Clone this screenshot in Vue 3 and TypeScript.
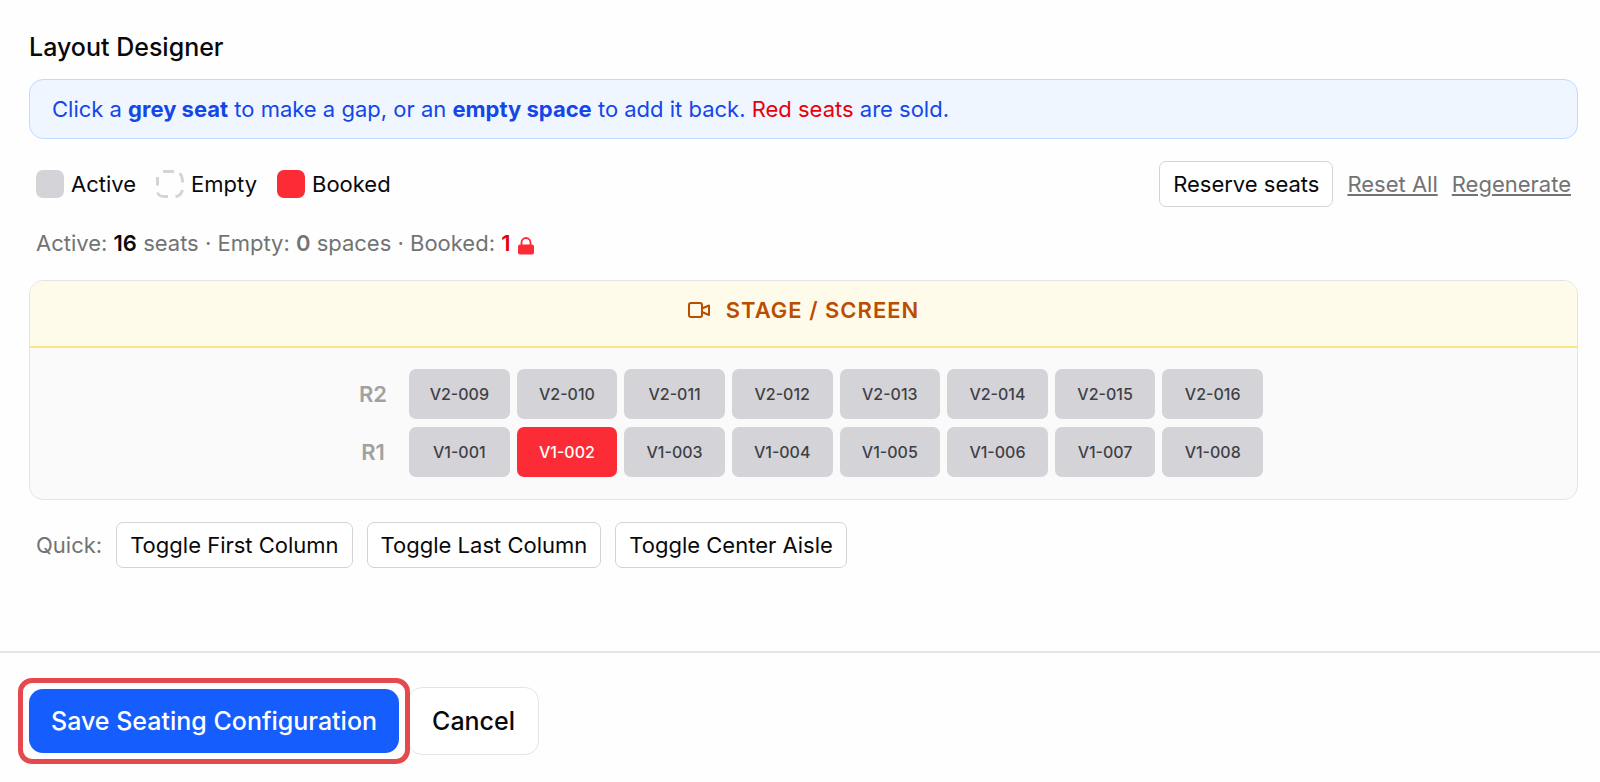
<script setup lang="ts">
import { computed, ref } from 'vue'

type SeatState = 'active' | 'empty' | 'booked'
interface Seat { id: string; state: SeatState }
interface Row { label: string; seats: Seat[] }

function makeRow(index: number, first: number): Row {
  return {
    label: `R${index}`,
    seats: Array.from({ length: 8 }, (_, i): Seat => {
      const id = `V${index}-${String(first + i).padStart(3, '0')}`
      return { id, state: id === 'V1-002' ? 'booked' : 'active' }
    }),
  }
}

const build = (): Row[] => [makeRow(2, 9), makeRow(1, 1)]
const rows = ref<Row[]>(build())

const all = computed(() => rows.value.flatMap((r) => r.seats))
const emptyCount = computed(() => all.value.filter((s) => s.state === 'empty').length)
const bookedCount = computed(() => all.value.filter((s) => s.state === 'booked').length)
const activeCount = computed(() => all.value.length - emptyCount.value)

function toggle(seat: Seat) {
  if (seat.state !== 'booked') seat.state = seat.state === 'active' ? 'empty' : 'active'
}
function toggleColumns(columns: number[]) {
  rows.value.forEach((r) => columns.forEach((c) => toggle(r.seats[c])))
}
function reset() {
  rows.value = build()
}

const quick = [
  { label: 'Toggle First Column', columns: [0] },
  { label: 'Toggle Last Column', columns: [7] },
  { label: 'Toggle Center Aisle', columns: [3, 4] },
]
</script>

<template>
  <main class="page">
    <section class="designer">
      <h2 class="title">Layout Designer</h2>

      <p class="hint">
        Click a <strong>grey seat</strong> to make a gap, or an <strong>empty space</strong> to add it back.
        <span class="sold">Red seats</span> are sold.
      </p>

      <div class="toolbar">
        <ul class="legend">
          <li><span class="swatch active"></span>Active</li>
          <li>
            <svg class="swatch" viewBox="0 0 28 28" fill="none" stroke="#d4d4d8" stroke-width="3" aria-hidden="true">
              <path d="M7 1.5h11M23.500 3.500q3 2 3 9M1.500 7v8.500M1.500 22.500q1 4 6.500 4h4M19.500 26.500q5.500-.5 7-6.500" />
            </svg>Empty
          </li>
          <li><span class="swatch booked"></span>Booked</li>
        </ul>
        <div class="actions">
          <button type="button" class="small">Reserve seats</button>
          <button type="button" class="link" @click="reset">Reset All</button>
          <button type="button" class="link" @click="reset">Regenerate</button>
        </div>
      </div>

      <p class="stats">
        Active: <b class="dark">{{ activeCount }}</b> seats · Empty: <b>{{ emptyCount }}</b> spaces · Booked:
        <b class="sold">{{ bookedCount }}</b>
        <svg class="lock" viewBox="0 0 16 18" aria-hidden="true">
          <path d="M3.500 8V5.500a4.500 4.500 0 0 1 9 0V8" fill="none" stroke="#fb2c36" stroke-width="1.800" />
          <rect y="7.500" width="16" height="10" rx="2" fill="#fb2c36" />
        </svg>
      </p>

      <div class="panel">
        <div class="stage">
          <svg class="camera" viewBox="0 0 22 16" fill="none" stroke="currentColor" stroke-width="2" stroke-linejoin="round" aria-hidden="true">
            <rect x="1" y="1" width="13" height="14" rx="2" />
            <path d="M14 6.500l7-3v9.500l-7-3" />
          </svg>
          <span>STAGE / SCREEN</span>
        </div>
        <div class="seats">
          <div v-for="row in rows" :key="row.label" class="row">
            <span class="row-label">{{ row.label }}</span>
            <button v-for="seat in row.seats" :key="seat.id" type="button" class="seat" :class="seat.state" @click="toggle(seat)">{{ seat.id }}</button>
          </div>
        </div>
      </div>

      <div class="quick">
        <span>Quick:</span>
        <button v-for="q in quick" :key="q.label" type="button" class="small" @click="toggleColumns(q.columns)">{{ q.label }}</button>
      </div>
    </section>

    <footer class="footer">
      <button type="button" class="save">Save Seating Configuration</button>
      <button type="button" class="cancel">Cancel</button>
    </footer>
  </main>
</template>

<style>
body {
  margin: 0;
  background: #fefefe;
}
</style>

<style scoped>
* {
  box-sizing: border-box;
}
.page {
  font-family: Inter, 'Liberation Sans', sans-serif;
  font-size: 22px;
  line-height: 28px;
  color: #09090b;
}
button {
  font: inherit;
  color: inherit;
  cursor: pointer;
}
.designer {
  padding: 29px 22px 83px 29px;
}
.title {
  margin: 0 0 14px;
  font-size: 25px;
  line-height: 36px;
  font-weight: 500;
}
.hint {
  margin: 0;
  padding: 15px 22px;
  border: 1px solid #bedbff;
  border-radius: 14px;
  background: #eff6ff;
  color: #1447e6;
}
.hint strong {
  font-weight: 700;
}
.hint .sold,
.stats .sold {
  color: #e7000b;
}
.toolbar {
  display: flex;
  align-items: center;
  justify-content: space-between;
  margin-top: 22px;
  padding: 0 7px;
}
.legend {
  display: flex;
  gap: 20px;
  margin: 0;
  padding: 0;
  list-style: none;
}
.legend li {
  display: flex;
  align-items: center;
  gap: 7px;
}
.swatch {
  width: 28px;
  height: 28px;
  border-radius: 7px;
}
.swatch.active {
  background: #d4d4d8;
}
.swatch.booked {
  background: #fb2c36;
}
.actions {
  display: flex;
  align-items: center;
  gap: 14px;
}
.small {
  padding: 8px 13px;
  border: 1px solid #d4d4d4;
  border-radius: 7px;
  background: #fff;
}
.link {
  padding: 0;
  border: 0;
  background: none;
  color: #737373;
  text-decoration: underline;
  text-underline-offset: 2px;
}
.stats {
  margin: 22px 0 23px;
  padding: 0 7px;
  color: #737373;
}
.stats b {
  font-weight: 600;
}
.stats .dark {
  color: #09090b;
}
.lock {
  width: 16px;
  height: 18px;
  margin-left: 7px;
  vertical-align: -4px;
}
.panel {
  border: 1px solid #e4e4e7;
  border-radius: 14px;
  background: #fafafa;
  overflow: hidden;
}
.stage {
  display: flex;
  align-items: center;
  justify-content: center;
  gap: 16px;
  padding: 15px 0 22px;
  border-bottom: 2px solid #fee685;
  background: #fffbeb;
  color: #bb4d00;
  font-weight: 600;
  letter-spacing: 1px;
}
.camera {
  width: 22px;
  height: 16px;
}
.seats {
  display: flex;
  flex-direction: column;
  align-items: center;
  gap: 8px;
  padding: 21px 22px 22px;
}
.row {
  display: grid;
  grid-template-columns: 58px repeat(8, 1fr);
  gap: 7px;
  width: 100%;
  max-width: 919px;
}
.row-label {
  align-self: center;
  text-align: center;
  font-weight: 600;
  color: #a1a1a1;
}
.seat {
  height: 50px;
  padding: 0;
  border: 0;
  border-radius: 7px;
  font-size: 16px;
  font-weight: 500;
  color: #3f3f46;
  background: #d4d4d8;
}
.seat.booked {
  background: #fb2c36;
  color: #fff;
}
.seat.empty {
  border: 3px dashed #d4d4d8;
  background: none;
  color: transparent;
}
.quick {
  display: flex;
  align-items: center;
  gap: 14px;
  margin-top: 22px;
  padding: 0 7px;
  color: #737373;
}
.quick .small {
  color: #09090b;
}
.footer {
  display: flex;
  align-items: center;
  gap: 9px;
  padding: 34px 29px 27px;
  border-top: 2px solid #e5e5e5;
}
.save,
.cancel {
  border-radius: 14px;
  font-size: 25px;
  line-height: 36px;
  font-weight: 500;
}
.save {
  position: relative;
  z-index: 1;
  padding: 14px 22px;
  border: 0;
  background: #155dfc;
  color: #fff;
}
/* highlight ring around the primary action */
.save::after {
  content: '';
  position: absolute;
  inset: -11px;
  border: 5px solid #e5484d;
  border-radius: 14px;
}
.cancel {
  padding: 15px 23px;
  border: 1px solid #e5e5e5;
  background: #fff;
}
</style>
